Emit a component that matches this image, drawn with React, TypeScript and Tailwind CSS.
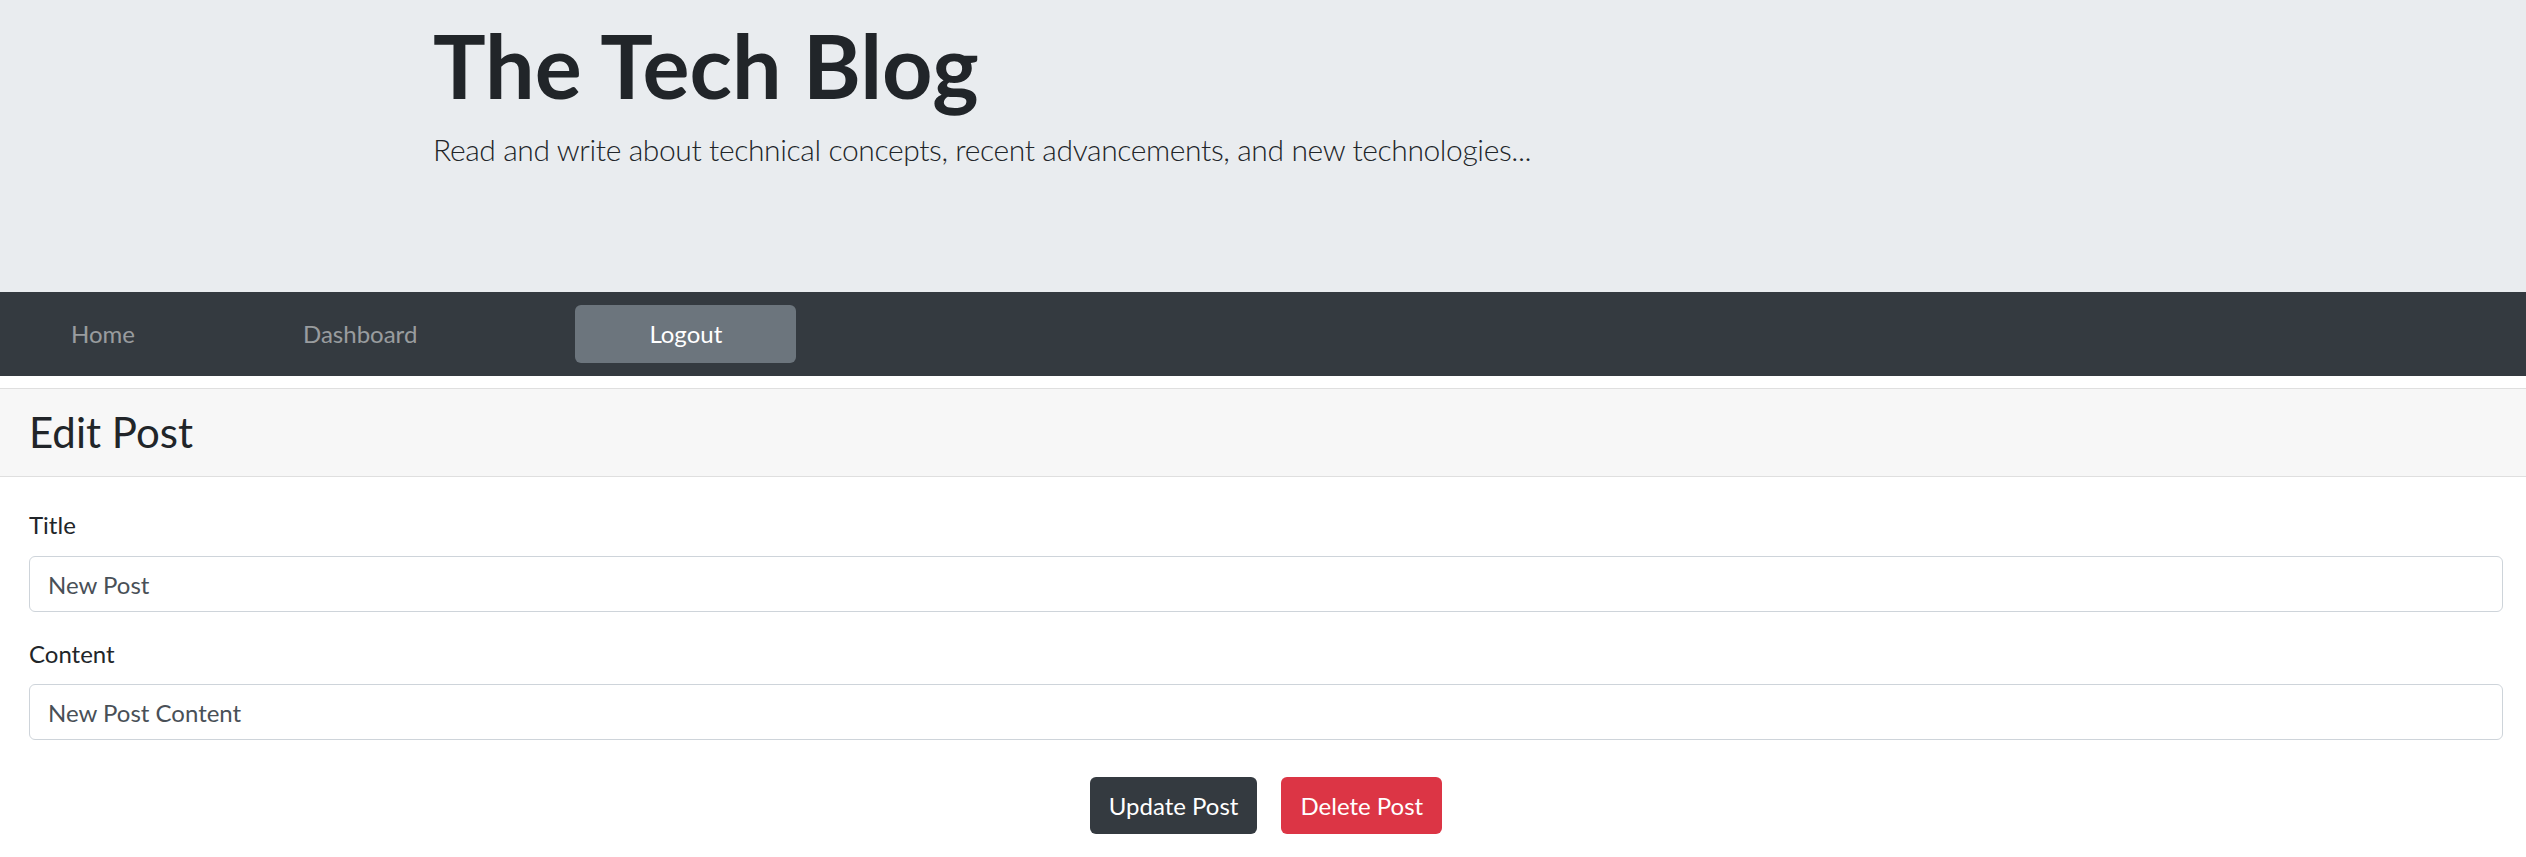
import React from 'react';

const font = { fontFamily: 'Lato, "Open Sans", sans-serif' };

export default function App() {
  return (
    <div className="min-h-screen bg-white text-[#212529]" style={font}>
      {/* Jumbotron */}
      <header className="h-[292px] bg-[#e9ecef] pl-[433px] pt-[13px]">
        <h1 className="text-[88px] leading-[1.2] font-bold">The Tech Blog</h1>
        <p className="mt-[8px] text-[30px] leading-[1.5] font-light tracking-[-0.38px]">
          Read and write about technical concepts, recent advancements, and new technologies...
        </p>
      </header>

      {/* Navbar */}
      <nav className="h-[84px] bg-[#343a40] flex items-center text-[24px] leading-[36px]">
        <a className="ml-[71px] text-white/50">Home</a>
        <a className="ml-[168px] text-white/50">Dashboard</a>
        <button className="ml-[158px] w-[221px] h-[58px] rounded-[6px] bg-[#6c757d] text-white">Logout</button>
      </nav>

      {/* Card */}
      <section className="mt-[12px] border-t border-[#dfdfdf]">
        <div className="h-[88px] bg-[#f7f7f7] border-b border-[#dfdfdf] flex items-center pl-[29px]">
          <h3 className="text-[42px] leading-[1.2] font-normal">Edit Post</h3>
        </div>
        <form className="pt-[30px] pl-[29px] pr-[23px] text-[24px] leading-[36px]">
          <div className="mb-[24px]">
            <label className="block">Title</label>
            <input
              readOnly
              value="New Post"
              className="mt-[13px] block w-full h-[56px] px-[18px] border border-[#ced4da] rounded-[6px] text-[#495057] outline-none"
            />
          </div>
          <div>
            <label className="block">Content</label>
            <input
              readOnly
              value="New Post Content"
              className="mt-[12px] block w-full h-[56px] px-[18px] border border-[#ced4da] rounded-[6px] text-[#495057] outline-none"
            />
          </div>
          <div className="mt-[37px] flex justify-center gap-[24px]">
            <button type="button" className="h-[57px] px-[19px] rounded-[6px] bg-[#343a40] text-white">
              Update Post
            </button>
            <button type="button" className="h-[57px] px-[19px] rounded-[6px] bg-[#dc3545] text-white">
              Delete Post
            </button>
          </div>
        </form>
      </section>
    </div>
  );
}
